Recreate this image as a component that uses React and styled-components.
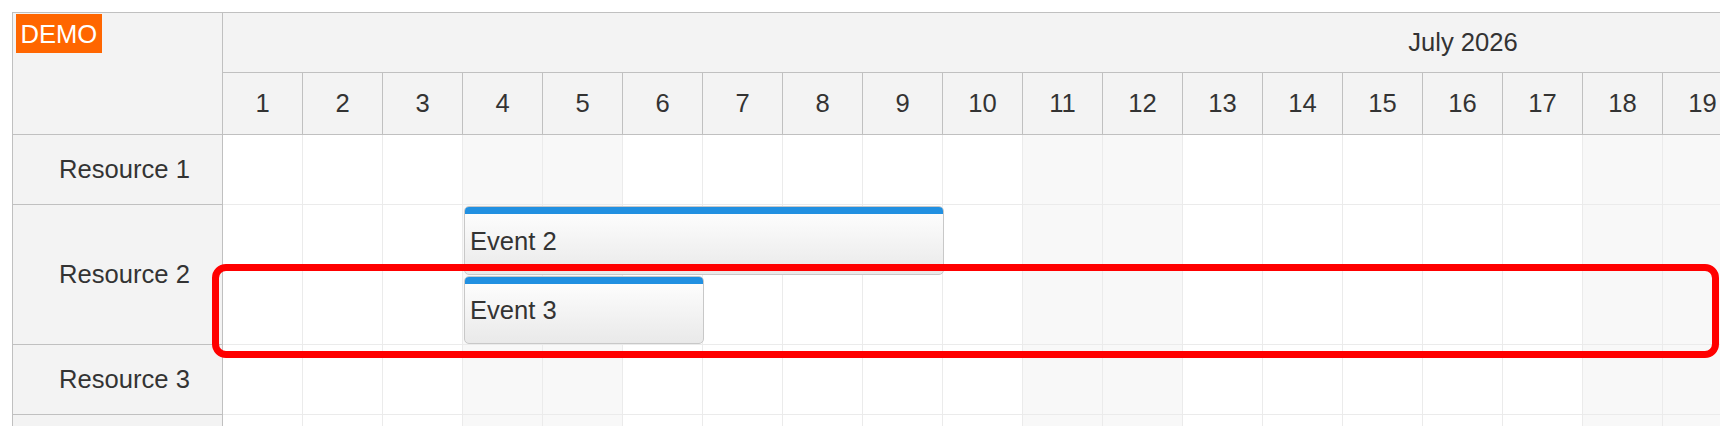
import React from 'react';
import styled, { createGlobalStyle } from 'styled-components';

const DAYS = Array.from({ length: 31 }, (_, i) => i + 1);
const CELL = 80;
const LANE = 70;

const resources = [
    { name: 'Resource 1', lanes: 1, events: [] },
    {
        name: 'Resource 2',
        lanes: 2,
        events: [
            { text: 'Event 2', start: 4, days: 6, lane: 1 },
            { text: 'Event 3', start: 4, days: 3, lane: 2 },
        ],
    },
    { name: 'Resource 3', lanes: 1, events: [] },
    { name: 'Resource 4', lanes: 1, events: [] },
];

const isWeekend = (day) => {
    const wd = new Date(2026, 6, day).getDay();
    return wd === 0 || wd === 6;
};

const App = () => {
    return (
        <>
            <GlobalStyle/>
            <Page>
                <Scheduler>
                    <LeftColumn>
                        <Corner>
                            <DemoBadge>DEMO</DemoBadge>
                        </Corner>
                        {resources.map(r => (
                            <RowHeader key={r.name} $lanes={r.lanes}>{r.name}</RowHeader>
                        ))}
                    </LeftColumn>
                    <MainColumn>
                        <MonthRow>
                            <MonthCell>July 2026</MonthCell>
                        </MonthRow>
                        <DayRow>
                            {DAYS.map(d => <DayCell key={d}>{d}</DayCell>)}
                        </DayRow>
                        {resources.map(r => (
                            <GridRow key={r.name} $lanes={r.lanes}>
                                {DAYS.map(d => (
                                    <GridCell key={d} $col={d} $weekend={isWeekend(d)}/>
                                ))}
                                {r.events.map(e => (
                                    <EventBox key={e.text} $start={e.start} $days={e.days} $lane={e.lane}>
                                        <EventBar/>
                                        <EventText>{e.text}</EventText>
                                    </EventBox>
                                ))}
                            </GridRow>
                        ))}
                    </MainColumn>
                </Scheduler>
                <Highlight/>
            </Page>
        </>
    )
}

export default App;

const GlobalStyle = createGlobalStyle`
  html, body {
    margin: 0;
    padding: 0;
    overflow: hidden;
    background: #fff;
  }
  body {
    font-family: "Liberation Sans", Arial, sans-serif;
    color: #333;
  }
`;

const Page = styled.div`
  position: relative;
  padding: 12px 0 0 12px;
`;

const Scheduler = styled.div`
  display: flex;
  width: max-content;
  border-left: 1px solid #c0c0c0;
  border-top: 1px solid #c0c0c0;
  font-size: 25.6px;
`;

const LeftColumn = styled.div`
  display: flex;
  flex-direction: column;
  width: 210px;
  flex-shrink: 0;
`;

const Corner = styled.div`
  box-sizing: border-box;
  height: 122px;
  background: #f3f3f3;
  border-right: 1px solid #c0c0c0;
  border-bottom: 1px solid #c0c0c0;
  padding: 1px 0 0 3px;
`;

const DemoBadge = styled.div`
  display: inline-block;
  height: 39px;
  line-height: 40px;
  padding: 0 4.5px;
  background: #ff6600;
  color: #fff;
`;

const RowHeader = styled.div`
  box-sizing: border-box;
  height: ${p => p.$lanes * LANE}px;
  display: flex;
  align-items: center;
  padding-left: 46px;
  background: #f3f3f3;
  border-right: 1px solid #c0c0c0;
  border-bottom: 1px solid #c0c0c0;
`;

const MainColumn = styled.div`
  display: flex;
  flex-direction: column;
`;

const MonthRow = styled.div`
  display: flex;
  box-sizing: border-box;
  height: 60px;
  background: #f3f3f3;
  border-bottom: 1px solid #c0c0c0;
`;

const MonthCell = styled.div`
  width: ${DAYS.length * CELL}px;
  display: flex;
  align-items: center;
  justify-content: center;
`;

const DayRow = styled.div`
  display: flex;
  box-sizing: border-box;
  height: 62px;
  background: #f3f3f3;
  border-bottom: 1px solid #c0c0c0;
`;

const DayCell = styled.div`
  box-sizing: border-box;
  width: ${CELL}px;
  display: flex;
  align-items: center;
  justify-content: center;
  border-right: 1px solid #c0c0c0;
`;

const GridRow = styled.div`
  box-sizing: border-box;
  height: ${p => p.$lanes * LANE}px;
  display: grid;
  grid-template-columns: repeat(${DAYS.length}, ${CELL}px);
  grid-template-rows: repeat(${p => p.$lanes}, 1fr);
  border-bottom: 1px solid #ebebeb;
`;

const GridCell = styled.div`
  grid-column: ${p => p.$col};
  grid-row: 1 / -1;
  background: ${p => (p.$weekend ? '#f8f8f8' : '#fff')};
  border-right: 1px solid #ebebeb;
`;

const EventBox = styled.div`
  grid-column: ${p => p.$start} / span ${p => p.$days};
  grid-row: ${p => p.$lane};
  z-index: 1;
  position: relative;
  box-sizing: border-box;
  margin: 1px -1px 0 1px;
  display: flex;
  align-items: center;
  padding: 2px 0 0 5px;
  border: 1px solid #c8c8c8;
  border-radius: 5px;
  overflow: hidden;
  background: linear-gradient(to bottom, #ffffff 0%, #e9e9e9 100%);
`;

const EventBar = styled.div`
  position: absolute;
  left: 0;
  right: 0;
  top: 0;
  height: 7px;
  background: #2190e1;
`;

const EventText = styled.span`
  white-space: nowrap;
`;

const Highlight = styled.div`
  position: absolute;
  left: 212px;
  top: 264px;
  width: 1507px;
  height: 94px;
  box-sizing: border-box;
  border: 7px solid #ff0000;
  border-radius: 14px;
  z-index: 2;
  pointer-events: none;
`;
